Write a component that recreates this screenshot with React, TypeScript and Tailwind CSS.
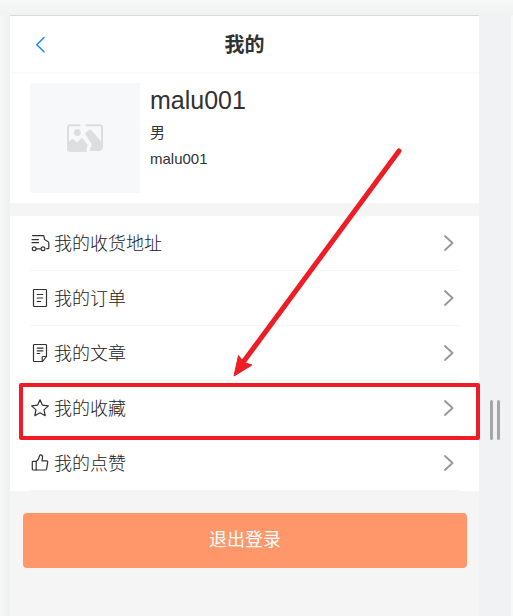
import type { ReactNode } from "react";

const strokeProps = {
  fill: "none",
  stroke: "currentColor",
  strokeWidth: 1.2,
  strokeLinecap: "round" as const,
  strokeLinejoin: "round" as const,
};

function Icon({ children }: { children: ReactNode }) {
  return (
    <svg className="h-5 w-5 shrink-0" viewBox="0 0 20 20" aria-hidden="true" {...strokeProps}>
      {children}
    </svg>
  );
}

const icons = {
  address: (
    <Icon>
      <path d="M2.5 2.6h10.6q.8 0 .9.8l.5 3.1 3.3 1.9q1 .6 1 1.5v4.9q0 .9-.9.9h-1.2" />
      <path d="M2 6.6h6.5M2 9.6h6.5" />
      <path d="M6.2 15.8h4.2" />
      <circle cx="4.2" cy="15.7" r="1.9" />
      <circle cx="13" cy="15.7" r="1.9" />
    </Icon>
  ),
  order: (
    <Icon>
      <rect x="3.5" y="1.5" width="13" height="17" rx="0.8" />
      <path d="M7.2 6.5h5.6M7.2 10h5.6M7.2 13.5h3.4" />
    </Icon>
  ),
  article: (
    <Icon>
      <path d="M16.5 13.5V2.3q0-.8-.8-.8H4.3q-.8 0-.8.8v15.4q0 .8.8.8h8.2z" />
      <path d="M12.2 18.3v-4q0-.8.8-.8h3.4" />
      <path d="M7.2 5.2h5.8M7.2 7.8h5.8M7.2 10.5h2.4" />
    </Icon>
  ),
  favorite: (
    <Icon>
      <path d="M10 1.8l2.5 5.4 5.9.7-4.4 4 1.2 5.8-5.2-2.9-5.2 2.9 1.2-5.8-4.4-4 5.9-.7z" />
    </Icon>
  ),
  like: (
    <Icon>
      <path d="M6.2 8.6q2.6-2 3.3-5.8.3-1.2 1.5-1 1.8.4 1.5 2.8L12 7.8h4.6q1.3 0 1.1 1.3l-1.1 6.8q-.2 1.1-1.3 1.1H6.2z" />
      <path d="M6.2 8.3H3.1q-.8 0-.8.8v7.1q0 .8.8.8h3.1" />
    </Icon>
  ),
};

const menu = [
  { key: "address", label: "我的收货地址", icon: icons.address, marked: false },
  { key: "order", label: "我的订单", icon: icons.order, marked: false },
  { key: "article", label: "我的文章", icon: icons.article, marked: false },
  { key: "favorite", label: "我的收藏", icon: icons.favorite, marked: true },
  { key: "like", label: "我的点赞", icon: icons.like, marked: false },
];

function PhotoPlaceholder() {
  return (
    <svg className="h-7 w-9" viewBox="0 0 36 28" aria-hidden="true">
      <path
        d="M13.5 1.2H3Q1 1.2 1 3.2v21.6q0 2 2 2h17M18.5 1.2H33q2 0 2 2v21.6"
        fill="none"
        stroke="#dcdee0"
        strokeWidth="2"
      />
      <circle cx="10.3" cy="8.5" r="3.4" fill="#dcdee0" />
      <path
        d="M1 18.5l3.6-3.2q1-.8 2 .1l3.2 3 5.2-4.6 5.7 7.2-2 6.8H3q-2 0-2-2zM17.8 9.6l4.3-3.9q1.2-.8 2.2.4L35 18.6V25q0 2-2 2H22.5l2.4-6.8z"
        fill="#dcdee0"
      />
    </svg>
  );
}

export default function App() {
  return (
    <div className="relative flex min-h-screen bg-linear-to-b from-[#f7f9f8] to-[#f0f2f1] to-[15px] pt-[15px] font-['Liberation_Sans','Noto_Sans_CJK_SC',sans-serif] text-[#323233]">
      <div className="w-2.5 shrink-0 bg-linear-to-r from-[#f5f7f6] to-[#eff1f0]" />
      <main className="min-w-0 flex-1 border-t border-[#d8dad9] bg-[#f5f5f5]">
        <header className="grid h-[58px] grid-cols-[60px_1fr_60px] items-center border-b-2 border-[#fafafa] bg-white">
          <button type="button" aria-label="返回" className="flex h-full items-center pl-5 text-[#1989fa]">
            <svg className="h-5 w-5" viewBox="0 0 20 20" {...strokeProps} strokeWidth={1.5}>
              <path d="M14 3.5L6.800 10.7l7.200 7" />
            </svg>
          </button>
          <h1 className="pt-0.5 text-center text-xl font-bold">我的</h1>
        </header>

        <section className="flex gap-2.5 bg-white px-5 pt-[9px] pb-2.5">
          <div className="flex h-[110px] w-[110px] shrink-0 items-center justify-center bg-[#f7f8fa]">
            <PhotoPlaceholder />
          </div>
          <div>
            <h2 className="mb-[3px] text-[25px] leading-[34px]">malu001</h2>
            <p className="text-[15px] leading-[26px]">男</p>
            <p className="text-[15px] leading-[26px]">malu001</p>
          </div>
        </section>

        <ul className="mt-[13px] bg-white">
          {menu.map((item) => (
            <li key={item.key} className="relative px-5">
              <a href={"#" + item.key} className="flex h-[55px] items-center border-b border-[#f5f5f5]">
                {item.icon}
                <span className="ml-1 flex-1 pt-0.5 text-[18px] leading-6 font-light text-[#222222]">{item.label}</span>
                <svg className="h-5 w-5 text-[#969799]" viewBox="0 0 20 20" aria-hidden="true" {...strokeProps} strokeWidth={1.8}>
                  <path d="M6 3l7.500 7L6 17" />
                </svg>
              </a>
              {item.marked && (
                <div className="pointer-events-none absolute top-0.5 -right-px -bottom-1 left-[9px] rounded-xs border-4 border-[#ee1c25]" />
              )}
            </li>
          ))}
        </ul>

        <div className="pt-[22px] pr-3 pb-12 pl-[13px]">
          <button type="button" className="h-[55px] w-full rounded bg-[#ff976a] text-[18px] text-white">
            退出登录
          </button>
        </div>
      </main>

      <aside className="mt-px flex w-8 shrink-0 items-start justify-center gap-1 bg-[#f1f2f4] pt-[384px]">
        <span className="h-10 w-[3px] rounded-full bg-[#a6a6a6]" />
        <span className="h-10 w-[3px] rounded-full bg-[#a6a6a6]" />
      </aside>
      <div className="w-0.5 shrink-0 bg-[#f7f9f8]" />

      <svg className="pointer-events-none absolute top-[146px] left-[230px] h-[234px] w-[176px]" viewBox="0 0 176 234" aria-hidden="true">
        <path d="M169 5L14 215" stroke="#ee1c25" strokeWidth="5" strokeLinecap="round" />
        <path d="M4 230L8.5 209.5l5.5 7L22 219z" fill="#ee1c25" stroke="#ee1c25" strokeLinejoin="round" />
      </svg>
    </div>
  );
}
